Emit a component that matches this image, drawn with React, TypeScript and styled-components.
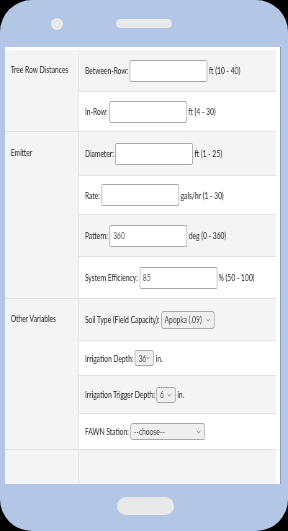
import React from 'react'
import styled, { createGlobalStyle } from 'styled-components'

const SQUEEZE = 0.72

const GlobalStyle = createGlobalStyle`
  html, body {
    margin: 0;
    padding: 0;
    background: #000;
  }
  #root {
    width: 288px;
    height: 531px;
  }
`

type Field =
  | { kind: 'input'; label: string; value?: string; unit: string; h: number }
  | { kind: 'select'; label: string; value: string; width: number; selH: number; unit?: string; h: number }

type Section = { title: string; rows: Field[] }

const sections: Section[] = [
  {
    title: 'Tree Row Distances',
    rows: [
      { kind: 'input', label: 'Between-Row:', unit: 'ft (10 - 40)', h: 41 },
      { kind: 'input', label: 'In-Row:', unit: 'ft (4 - 30)', h: 40 }
    ]
  },
  {
    title: 'Emitter',
    rows: [
      { kind: 'input', label: 'Diameter:', unit: 'ft (1 - 25)', h: 43 },
      { kind: 'input', label: 'Rate:', unit: 'gals/hr (1 - 30)', h: 39 },
      { kind: 'input', label: 'Pattern:', value: '360', unit: 'deg (0 - 360)', h: 42 },
      { kind: 'input', label: 'System Efficiency:', value: '85', unit: '% (50 - 100)', h: 42 }
    ]
  },
  {
    title: 'Other Variables',
    rows: [
      { kind: 'select', label: 'Soil Type (Field Capacity):', value: 'Apopka (.09)', width: 74, selH: 18, h: 41 },
      { kind: 'select', label: 'Irrigation Depth:', value: '36', width: 27, selH: 16, unit: 'in.', h: 35 },
      { kind: 'select', label: 'Irrigation Trigger Depth:', value: '6', width: 27, selH: 16, unit: 'in.', h: 38 },
      { kind: 'select', label: 'FAWN Station:', value: '--choose--', width: 104, selH: 17, h: 36 }
    ]
  }
]

function Chevron() {
  return (
    <svg width="6" height="4" viewBox="0 0 6 4">
      <path d="M0.6 0.6 L3 3.2 L5.4 0.6" fill="none" stroke="#777" strokeWidth="0.9" />
    </svg>
  )
}

function App() {
  return (
    <>
      <GlobalStyle />
      <Phone>
        <TopBar>
          <Camera />
          <Speaker />
        </TopBar>
        <Screen>
          <Sheet>
            {sections.map(section => (
              <Group key={section.title}>
                <GroupTitle first={section.rows[0].h}>{section.title}</GroupTitle>
                <Rows>
                  {section.rows.map((row, i) => (
                    <Row key={row.label} h={row.h} shaded={i % 2 === 0}>
                      <Label>{row.label}</Label>
                      {row.kind === 'input' ? (
                        <TextBox defaultValue={row.value || ''} />
                      ) : (
                        <SelectBox w={row.width} h={row.selH}>
                          <span>{row.value}</span>
                          <Chevron />
                        </SelectBox>
                      )}
                      {row.unit && <Unit>{row.unit}</Unit>}
                    </Row>
                  ))}
                </Rows>
              </Group>
            ))}
            <Group>
              <GroupTitle first={37} />
              <Rows>
                <Row h={37} shaded />
              </Rows>
            </Group>
          </Sheet>
        </Screen>
        <BottomBar>
          <HomeButton />
        </BottomBar>
      </Phone>
    </>
  )
}

const Phone = styled.div`
  width: 288px;
  height: 531px;
  background: #b3c6e6;
  border-radius: 32px;
  display: flex;
  flex-direction: column;
  overflow: hidden;
`

const TopBar = styled.div`
  height: 47px;
  display: flex;
  align-items: center;
  padding-left: 51px;
  gap: 53px;
`

const Camera = styled.div`
  width: 12px;
  height: 12px;
  border-radius: 50%;
  background: #e9e9ea;
`

const Speaker = styled.div`
  width: 56px;
  height: 9px;
  border-radius: 5px;
  background: #e9e9ea;
`

const Screen = styled.div`
  width: 276px;
  height: 437px;
  margin-left: 5px;
  padding-top: 3px;
  box-sizing: border-box;
  background: #fff;
  border-right: 1px solid #8e9cb2;
  overflow: hidden;
`

const Sheet = styled.div`
  width: ${271 / SQUEEZE}px;
  transform: scaleX(${SQUEEZE});
  transform-origin: left top;
  will-change: transform;
  font-family: Lato, 'Open Sans', sans-serif;
  font-size: 9.3px;
  color: #222;
  -webkit-font-smoothing: antialiased;
`

const Group = styled.div`
  display: grid;
  grid-template-columns: 103px 1fr;
  & + & {
    border-top: 1px solid #e2e2e2;
  }
`

const GroupTitle = styled.div<{ first: number }>`
  background: #f4f4f4;
  border-right: 1px solid #e2e2e2;
  padding: ${p => (p.first - 12) / 2 - 1}px 0 0 8px;
  line-height: 12px;
`

const Rows = styled.div`
  display: flex;
  flex-direction: column;
`

const Row = styled.div<{ h: number; shaded?: boolean }>`
  height: ${p => p.h}px;
  box-sizing: border-box;
  display: flex;
  align-items: center;
  padding-left: 8px;
  background: ${p => (p.shaded ? '#f4f4f4' : '#fff')};
  white-space: nowrap;
  & + & {
    border-top: 1px solid #e2e2e2;
  }
`

const Label = styled.span`
  margin-right: 2px;
`

const TextBox = styled.input`
  width: 108px;
  height: 22px;
  box-sizing: border-box;
  border: 1px solid #a8a8a8;
  border-radius: 2px;
  background: #fff;
  padding: 0 4px;
  font: inherit;
  color: #555;
  outline: none;
`

const SelectBox = styled.div<{ w: number; h: number }>`
  width: ${p => p.w}px;
  height: ${p => p.h}px;
  box-sizing: border-box;
  border: 1px solid #a8a8a8;
  border-radius: 3px;
  background: #efefef;
  display: flex;
  align-items: center;
  justify-content: space-between;
  padding: 0 5px 0 4px;
  color: #444;
`

const Unit = styled.span`
  margin-left: 2px;
`

const BottomBar = styled.div`
  flex: 1;
  display: flex;
  justify-content: center;
  padding: 13px 0 0 2px;
`

const HomeButton = styled.div`
  width: 57px;
  height: 18px;
  border-radius: 9px;
  background: #e9e9ea;
`

export default App
